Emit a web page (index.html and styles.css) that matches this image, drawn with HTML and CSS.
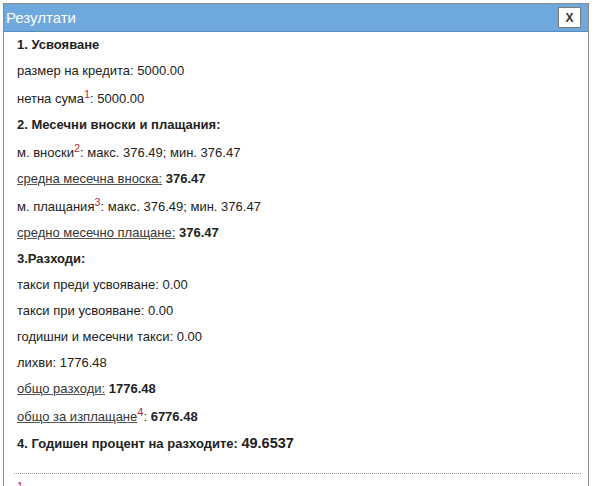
FILE: index.html
```html
<!DOCTYPE html>
<html lang="bg">
<head>
<meta charset="utf-8">
<title>Резултати</title>
<link rel="stylesheet" href="styles.css">
</head>
<body>
<div class="dialog">
  <div class="titlebar">
    <span class="title">Резултати</span>
    <button class="close" type="button">X</button>
  </div>
  <div class="content">
    <p class="head">1. Усвояване</p>
    <p>размер на кредита: 5000.00</p>
    <p class="ref">нетна сума<sup>1</sup>: 5000.00</p>
    <p class="head">2. Месечни вноски и плащания:</p>
    <p class="ref">м. вноски<sup>2</sup>: макс. 376.49; мин. 376.47</p>
    <p><u>средна месечна вноска:</u> <b>376.47</b></p>
    <p class="ref">м. плащания<sup>3</sup>: макс. 376.49; мин. 376.47</p>
    <p><u>средно месечно плащане:</u> <b>376.47</b></p>
    <p class="head">3.Разходи:</p>
    <p>такси преди усвояване: 0.00</p>
    <p>такси при усвояване: 0.00</p>
    <p>годишни и месечни такси: 0.00</p>
    <p>лихви: 1776.48</p>
    <p><u>общо разходи:</u> <b>1776.48</b></p>
    <p class="ref"><u>общо за изплащане</u><sup>4</sup>: <b>6776.48</b></p>
    <p class="head">4. Годишен процент на разходите: <span class="apr">49.6537</span></p>
    <hr class="sep">
    <p class="note"><sup>1</sup></p>
  </div>
</div>
</body>
</html>
```
FILE: styles.css
```css
html, body {
  margin: 0;
  padding: 0;
  background: #fff;
}

body {
  font-family: "Liberation Sans", Arial, sans-serif;
  color: #222;
  font-size: 13px;
}

.dialog {
  margin: 3px 0 0 3px;
  width: 584px;
  height: 490px;
  border: 1px solid #8a8a8a;
  border-bottom: none;
  overflow: hidden;
}

.titlebar {
  display: flex;
  align-items: center;
  justify-content: space-between;
  height: 27px;
  background: #6fa8dc;
  border-bottom: 1px solid #5a8cbc;
  padding: 0 7px 0 2px;
}

.title {
  color: #fff;
  font-size: 15px;
}

.close {
  width: 23px;
  height: 21px;
  padding: 0;
  background: #fff;
  border: 1px solid #7a7a7a;
  font-family: "Liberation Sans", Arial, sans-serif;
  font-weight: bold;
  font-size: 12px;
  color: #333;
  cursor: pointer;
}

.content {
  padding: 0 10px 0 13px;
}

.content p {
  margin: 10px 0 0 0;
  line-height: 16px;
}

.content p:first-child {
  margin-top: 5px;
}

.content p.ref {
  margin-top: 12px;
}

.content p.head {
  font-weight: bold;
}

.apr {
  font-size: 14.5px;
}

u {
  color: #333;
  text-decoration-color: #555;
}

sup {
  color: #c0282d;
  font-size: 11px;
  line-height: 0;
  vertical-align: 5px;
}

.sep {
  margin: 21px -3px 0 -3px;
  border: none;
  border-top: 1px dotted #999;
}

.note {
  font-size: 10px;
}
```
